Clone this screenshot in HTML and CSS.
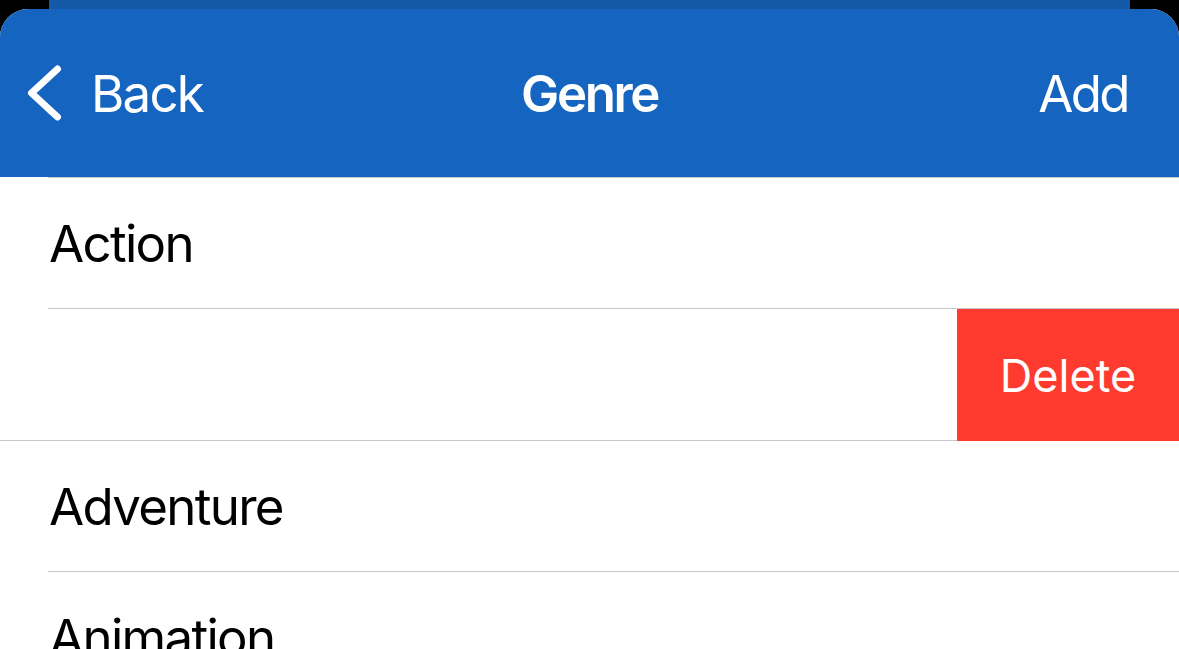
FILE: index.html
```html
<!DOCTYPE html>
<html>
<head>
<meta charset="utf-8">
<link rel="stylesheet" href="styles.css">
</head>
<body>
<div class="behind"></div>
<div class="sheet">
  <header class="nav">
    <div class="nav-left">
      <svg class="chevron" width="40" height="60" viewBox="0 0 40 60">
        <path d="M35.5 6 L9.5 30 L35.5 54" fill="none" stroke="#fff" stroke-width="7" stroke-linecap="round" stroke-linejoin="round"/>
      </svg>
      <span>Back</span>
    </div>
    <div class="nav-title">Genre</div>
    <div class="nav-right">Add</div>
  </header>
  <div class="sep inset"></div>
  <div class="row"><span class="label">Action</span></div>
  <div class="sep inset"></div>
  <div class="row swiped">
    <div class="swiped-content"></div>
    <div class="delete">Delete</div>
  </div>
  <div class="sep full"></div>
  <div class="row"><span class="label">Adventure</span></div>
  <div class="sep inset"></div>
  <div class="row"><span class="label">Animation</span></div>
</div>
</body>
</html>
```

FILE: styles.css
```css
html, body {
  margin: 0;
  padding: 0;
  background: #000;
  height: 649px;
  overflow: hidden;
}
body {
  font-family: Inter, "Noto Sans", sans-serif;
}
.behind {
  height: 9px;
  margin: 0 49px;
  background: #1458a8;
}
.sheet {
  background: #fff;
  border-radius: 28px 28px 0 0;
  overflow: hidden;
  height: 640px;
}
.nav {
  height: 168px;
  background: #1565c0;
  display: grid;
  grid-template-columns: 1fr auto 1fr;
  align-items: center;
  color: #fff;
  font-size: 51px;
  letter-spacing: -1.8px;
}
.nav-left {
  display: flex;
  align-items: center;
  padding-left: 22px;
}
.chevron {
  display: block;
  margin-right: 29px;
}
.nav-title {
  font-weight: 600;
  letter-spacing: -2.4px;
}
.nav-right {
  justify-self: end;
  padding-right: 51px;
  letter-spacing: -2.6px;
}
.sep {
  height: 1px;
  background: #c8c7cc;
}
.sep.inset {
  margin-left: 48px;
}
.row {
  height: 130px;
  display: flex;
  align-items: center;
  padding-left: 49px;
  font-size: 51px;
  letter-spacing: -1.7px;
  color: #000;
}
.row.swiped {
  height: 131px;
  padding-left: 0;
  align-items: stretch;
}
.swiped-content {
  flex: 1;
}
.delete {
  width: 222px;
  height: 132px;
  background: #ff3b30;
  color: #fff;
  font-size: 45px;
  letter-spacing: 0;
  display: flex;
  align-items: center;
  justify-content: center;
  position: relative;
  z-index: 1;
}
.row + .sep.inset + .row {
  height: 131px;
}
```
